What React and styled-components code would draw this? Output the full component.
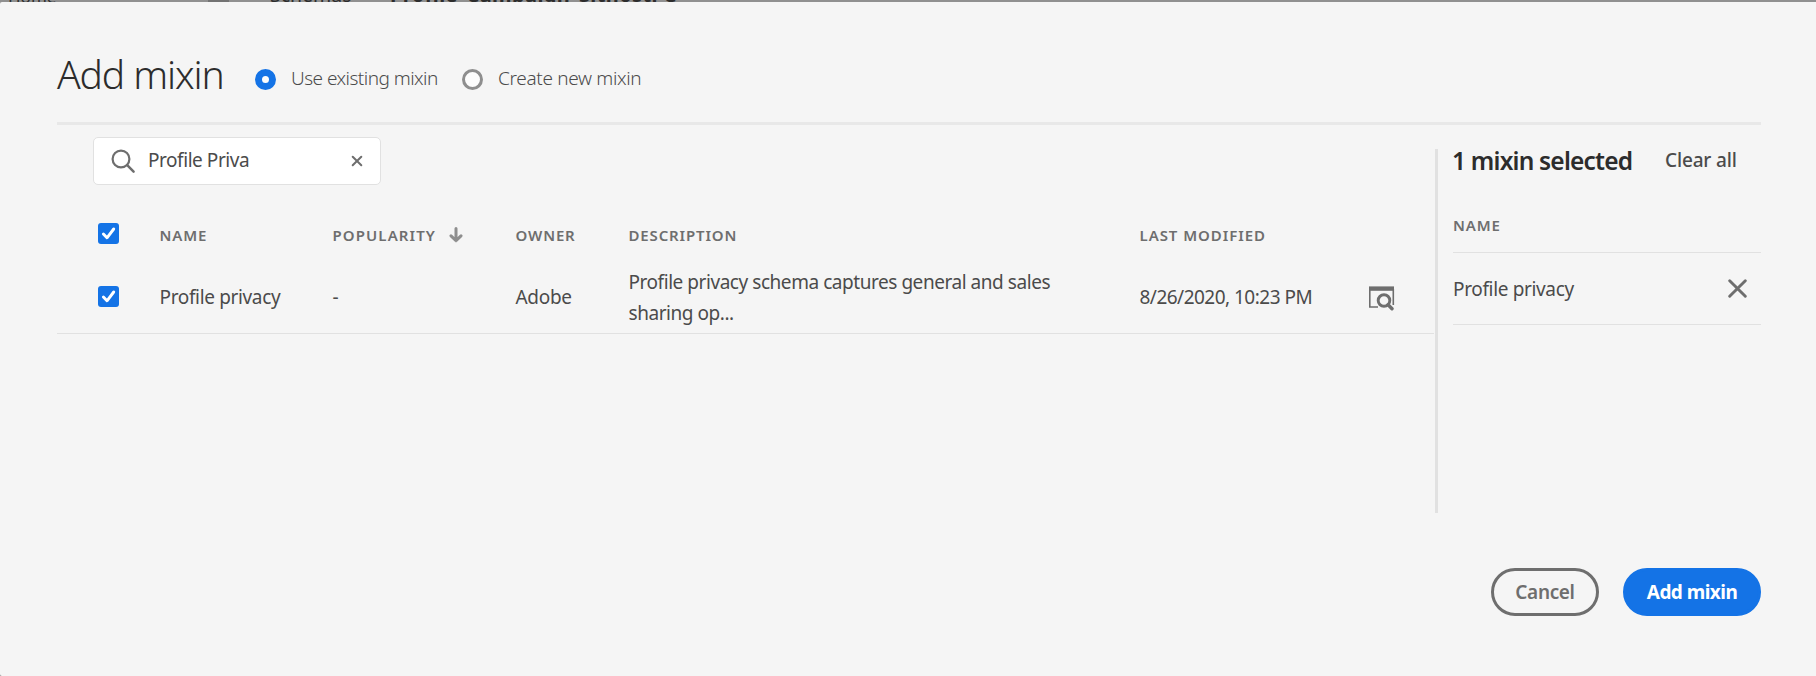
import React from "react";
import styled, { createGlobalStyle, css } from "styled-components";

const Global = createGlobalStyle`
  * { box-sizing: border-box; }
  body { margin: 0; background: #f5f5f5; }
`;

const Page = styled.div`
  width: 1816px;
  height: 676px;
  overflow: hidden;
  display: flex;
  flex-direction: column;
  background: #909090;
  color: #4b4b4b;
  font-family: "Noto Sans", "Open Sans", sans-serif;
  font-size: 19px;
`;

const Backdrop = styled.div`
  flex: none;
  height: 2px;
  overflow: hidden;
  display: flex;
  background: #909090;
`;

const Crumb = styled.span`
  flex: none;
  width: ${(p) => p.$width}px;
  margin-left: ${(p) => p.$gap}px;
  margin-top: ${(p) => p.$lift}px;
  font-size: ${(p) => p.$size}px;
  font-weight: ${(p) => p.$weight};
  line-height: 20px;
  letter-spacing: ${(p) => p.$track || 0}px;
  white-space: nowrap;
  color: #2c2c2c;
`;

const Tab = styled.span`
  flex: none;
  width: 21px;
  height: 2px;
  margin-left: 154px;
  background: #737373;
`;

const Dialog = styled.section`
  flex: 1;
  display: flex;
  flex-direction: column;
  padding: 0 55px 0 57px;
  background: #f5f5f5;
  border-radius: 2px 0 0 2px;
`;

const Header = styled.header`
  height: 123px;
  display: flex;
  align-items: flex-start;
  border-bottom: 3px solid #e8e8e8;
`;

const Title = styled.h1`
  margin: 0;
  width: 198px;
  padding-top: 46px;
  font-size: 39px;
  line-height: 52px;
  font-weight: 300;
  letter-spacing: -1.1px;
  white-space: nowrap;
  color: #2c2c2c;
`;

const RadioOption = styled.label`
  width: 207px;
  display: flex;
  align-items: center;
  gap: 15px;
  padding-top: 62px;
  font-weight: 300;
  line-height: 28px;
  letter-spacing: ${(p) => p.$track}px;
  white-space: nowrap;
`;

const Radio = styled.span`
  flex: none;
  width: 21px;
  height: 21px;
  margin-top: 3px;
  border-radius: 50%;
  background: #fcfcfc;
  border: ${(p) => (p.$on ? "7px solid #1473e6" : "3px solid #8e8e8e")};
`;

const Body = styled.div`
  height: 388px;
  display: flex;
`;

const Results = styled.div`
  width: 1377px;
`;

const SearchField = styled.div`
  width: 288px;
  height: 48px;
  margin: 12px 0 0 36px;
  padding: 0 17px;
  display: flex;
  align-items: center;
  background: #fff;
  border: 1px solid #e1e1e1;
  border-radius: 5px;
`;

const SearchText = styled.span`
  flex: 1;
  margin: -3px 0 0 12px;
  letter-spacing: -0.45px;
`;

const row = css`
  display: grid;
  grid-template-columns: 61.5px 173px 183px 113px 511px 229.5px 1fr;
  align-items: center;
  padding-left: 41px;
`;

const HeadRow = styled.div`
  ${row}
  height: 78px;
  padding-top: 18px;
`;

const DataRow = styled.div`
  ${row}
  height: 71px;
  border-bottom: 1px solid #e1e1e1;
`;

const ColumnLabel = styled.span`
  display: flex;
  align-items: center;
  gap: 13px;
  padding-top: 3px;
  font-size: 15px;
  line-height: 20px;
  font-weight: 600;
  letter-spacing: ${(p) => p.$track || 0.85}px;
  white-space: nowrap;
  color: #6e6e6e;
`;

const Cell = styled.span`
  line-height: 31px;
  padding-bottom: ${(p) => p.$lift || 0}px;
  padding-top: ${(p) => p.$drop || 0}px;
  letter-spacing: ${(p) => p.$track}px;
  white-space: pre-line;
`;

const Checkbox = styled.span`
  width: 21px;
  height: 21px;
  display: flex;
  margin-bottom: ${(p) => p.$lift || 0}px;
  border-radius: 3px;
  background: #1473e6;
`;

const Divider = styled.div`
  width: 3px;
  height: 364px;
  margin: 24px 15px 0 1px;
  background: #e1e1e1;
`;

const Selection = styled.aside`
  flex: 1;
  padding-top: 16px;
`;

const SelectionHead = styled.div`
  height: 38px;
  display: flex;
  align-items: center;
  white-space: nowrap;
`;

const SelectionTitle = styled.h2`
  margin: 0 0 0 -1px;
  width: 213px;
  font-size: 24.5px;
  font-weight: 600;
  letter-spacing: -0.8px;
  color: #2c2c2c;
`;

const ClearAll = styled.button`
  padding: 0 0 1px;
  border: 0;
  background: none;
  color: inherit;
  font: inherit;
  font-weight: 500;
  letter-spacing: -0.15px;
`;

const SelectionLabel = styled.div`
  height: 74px;
  padding-top: 33px;
  border-bottom: 1px solid #e1e1e1;
`;

const SelectedItem = styled.div`
  height: 72px;
  display: flex;
  align-items: center;
  justify-content: space-between;
  padding-right: 14px;
  border-bottom: 1px solid #e1e1e1;
`;

const Footer = styled.footer`
  display: flex;
  justify-content: flex-end;
  gap: 24px;
  margin-top: 55px;
`;

const Button = styled.button`
  width: ${(p) => p.$width}px;
  height: 48px;
  padding: 0;
  border: 3px solid ${(p) => (p.$primary ? "#1473e6" : "#6e6e6e")};
  border-radius: 24px;
  background: ${(p) => (p.$primary ? "#1473e6" : "transparent")};
  color: ${(p) => (p.$primary ? "#fff" : "#6e6e6e")};
  font: inherit;
  font-weight: ${(p) => (p.$primary ? 700 : 600)};
  letter-spacing: ${(p) => (p.$primary ? -0.55 : -0.35)}px;
  white-space: nowrap;
`;

const SearchIcon = () => (
  <svg width="25" height="25" viewBox="0 0 25 25" fill="none" stroke="#6e6e6e" strokeLinecap="round">
    <circle cx="10" cy="10" r="8.4" strokeWidth="2.2" />
    <path d="M16.2 16.2L22.6 22.6" strokeWidth="2.5" />
  </svg>
);

const Cross = ({ size, width }) => (
  <svg width={size} height={size} viewBox={`0 0 ${size} ${size}`} fill="none" stroke="#6e6e6e" strokeWidth={width} strokeLinecap="round">
    <path d={`M1.7 1.7L${size - 1.7} ${size - 1.7}M${size - 1.7} 1.7L1.7 ${size - 1.7}`} />
  </svg>
);

const SortArrow = () => (
  <svg width="14" height="16" viewBox="0 0 14 16" fill="none" stroke="#8e8e8e" strokeWidth="3" strokeLinecap="round" strokeLinejoin="round">
    <path d="M7 1.5V13.4M2 8.8L7 13.6L12 8.8" />
  </svg>
);

const CheckMark = () => (
  <svg width="21" height="21" viewBox="0 0 21 21" fill="none" stroke="#fff" strokeWidth="2.9" strokeLinecap="round" strokeLinejoin="round">
    <path d="M5.4 11L9 14.8L15.7 6" />
  </svg>
);

const PreviewIcon = () => (
  <svg width="26" height="25" viewBox="0 0 26 25" fill="none" stroke="#6e6e6e">
    <path d="M0 0.4H25V4.8H0Z" fill="#6e6e6e" stroke="none" />
    <path d="M0.8 3V21H9M24.3 3V19" strokeWidth="1.6" />
    <circle cx="15" cy="14.5" r="5.8" strokeWidth="2.9" />
    <path d="M19.1 18.8L23 22.8" strokeWidth="3.4" strokeLinecap="round" />
  </svg>
);

export default function App() {
  return (
    <Page>
      <Global />
      <Backdrop aria-hidden="true">
        <Crumb $width={46} $gap={8} $lift={-13} $size={17} $weight={400}>Home</Crumb>
        <Tab />
        <Crumb $width={80} $gap={41} $lift={-15} $size={19.5} $weight={400}>Schemas</Crumb>
        <Crumb $width={300} $gap={40} $lift={-15} $size={20} $weight={700} $track={0.4}>Profile_Campaign_Sitnosti C</Crumb>
      </Backdrop>
      <Dialog>
        <Header>
          <Title>Add mixin</Title>
          <RadioOption $track={-0.53}><Radio $on />Use existing mixin</RadioOption>
          <RadioOption $track={-0.33}><Radio />Create new mixin</RadioOption>
        </Header>
        <Body>
          <Results>
            <SearchField>
              <SearchIcon />
              <SearchText>Profile Priva</SearchText>
              <Cross size={12} width={2} />
            </SearchField>
            <HeadRow>
              <Checkbox><CheckMark /></Checkbox>
              <ColumnLabel>NAME</ColumnLabel>
              <ColumnLabel $track={1.1}>POPULARITY<SortArrow /></ColumnLabel>
              <ColumnLabel>OWNER</ColumnLabel>
              <ColumnLabel>DESCRIPTION</ColumnLabel>
              <ColumnLabel $track={0.95}>LAST MODIFIED</ColumnLabel>
            </HeadRow>
            <DataRow>
              <Checkbox $lift={3}><CheckMark /></Checkbox>
              <Cell $lift={2} $track={-0.35}>Profile privacy</Cell>
              <Cell $lift={2}>-</Cell>
              <Cell $lift={2} $track={-0.3}>Adobe</Cell>
              <Cell $track={-0.45}>{"Profile privacy schema captures general and sales\nsharing op..."}</Cell>
              <Cell $lift={2} $track={-0.52}>8/26/2020, 10:23 PM</Cell>
              <PreviewIcon />
            </DataRow>
          </Results>
          <Divider />
          <Selection>
            <SelectionHead>
              <SelectionTitle>1 mixin selected</SelectionTitle>
              <ClearAll>Clear all</ClearAll>
            </SelectionHead>
            <SelectionLabel><ColumnLabel>NAME</ColumnLabel></SelectionLabel>
            <SelectedItem>
              <Cell $drop={2} $track={-0.35}>Profile privacy</Cell>
              <Cross size={19} width={2.9} />
            </SelectedItem>
          </Selection>
        </Body>
        <Footer>
          <Button $width={108}>Cancel</Button>
          <Button $width={138} $primary>Add mixin</Button>
        </Footer>
      </Dialog>
    </Page>
  );
}
